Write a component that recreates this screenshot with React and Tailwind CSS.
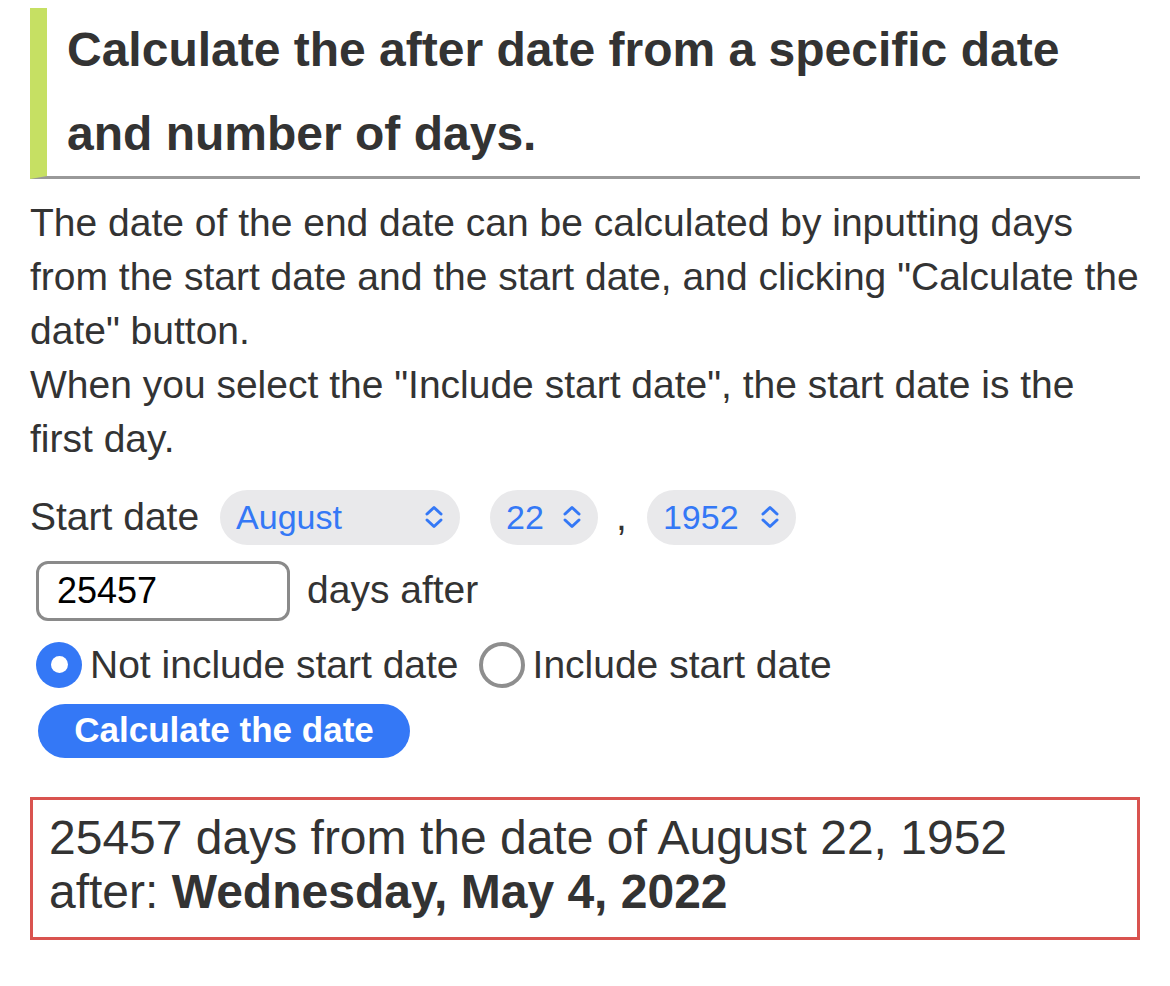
import React, { useState } from 'react';

const MONTHS = ['January', 'February', 'March', 'April', 'May', 'June', 'July', 'August', 'September', 'October', 'November', 'December'];

const Chevrons = () => (
  <svg width="22" height="26" viewBox="0 0 22 26" fill="none" className="shrink-0">
    <path d="M4 10 L11 3.5 L18 10" stroke="#3478f6" strokeWidth="3" strokeLinecap="round" strokeLinejoin="round" />
    <path d="M4 16 L11 22.5 L18 16" stroke="#3478f6" strokeWidth="3" strokeLinecap="round" strokeLinejoin="round" />
  </svg>
);

const Pill = ({ value, width }) => (
  <div className={`flex items-center justify-between h-[55px] rounded-full bg-[#e9e9eb] pl-[16px] pr-[15px] text-[#3478f6] text-[34px] ${width}`}>
    <span>{value}</span>
    <Chevrons />
  </div>
);

const Radio = ({ checked }) => (
  checked ? (
    <span className="flex items-center justify-center w-[46px] h-[46px] rounded-full bg-[#3478f6] shrink-0">
      <span className="w-[17px] h-[17px] rounded-full bg-white" />
    </span>
  ) : (
    <span className="w-[46px] h-[46px] rounded-full border-[4px] border-[#8e8e8e] shrink-0" />
  )
);

export default function App() {
  const [mode] = useState('not');

  return (
    <div className="bg-white min-h-[986px] pl-[30px] pr-[30px] pt-[8px] text-[#333] font-['Liberation_Sans',Arial,sans-serif]">
      <h2 className="border-l-[17px] border-l-[#c6e063] border-b-[3px] border-b-[#999] pl-[20px] text-[48px] leading-[84px] font-bold">
        Calculate the after date from a specific date and number of days.
      </h2>

      <p className="mt-[17px] text-[39px] leading-[54px]">
        The date of the end date can be calculated by inputting days from the start date and the start date, and clicking "Calculate the date" button.
        <br />
        When you select the "Include start date", the start date is the first day.
      </p>

      <div className="mt-[22px] flex items-center text-[39px]">
        <span>Start date</span>
        <div className="ml-[21px]"><Pill value={MONTHS[7]} width="w-[240px]" /></div>
        <div className="ml-[30px]"><Pill value="22" width="w-[108px]" /></div>
        <span className="ml-[18px] mr-[20px]">,</span>
        <Pill value="1952" width="w-[149px]" />
      </div>

      <div className="mt-[14px] flex items-center text-[39px]">
        <div className="ml-[6px] w-[254px] h-[60px] border-[3px] border-[#8a8a8a] rounded-[12px] flex items-center pl-[18px] text-black text-[36px]">
          25457
        </div>
        <span className="ml-[17px]">days after</span>
      </div>

      <div className="mt-[20px] flex items-center text-[39px] leading-[48px]">
        <div className="ml-[6px] flex items-center gap-[8px]">
          <Radio checked={mode === 'not'} />
          <span>Not include start date</span>
        </div>
        <div className="ml-[20px] flex items-center gap-[8px]">
          <Radio checked={mode === 'inc'} />
          <span>Include start date</span>
        </div>
      </div>

      <button className="mt-[15px] ml-[8px] h-[54px] w-[372px] rounded-full bg-[#3478f6] text-white font-bold text-[35px] flex items-center justify-center">
        Calculate the date
      </button>

      <div className="mt-[39px] border-[3px] border-[#d9534f] px-[16px] pt-[11px] pb-[18px] text-[48px] leading-[54px]">
        25457 days from the date of August 22, 1952
        <br />
        after: <b>Wednesday, May 4, 2022</b>
      </div>
    </div>
  );
}
